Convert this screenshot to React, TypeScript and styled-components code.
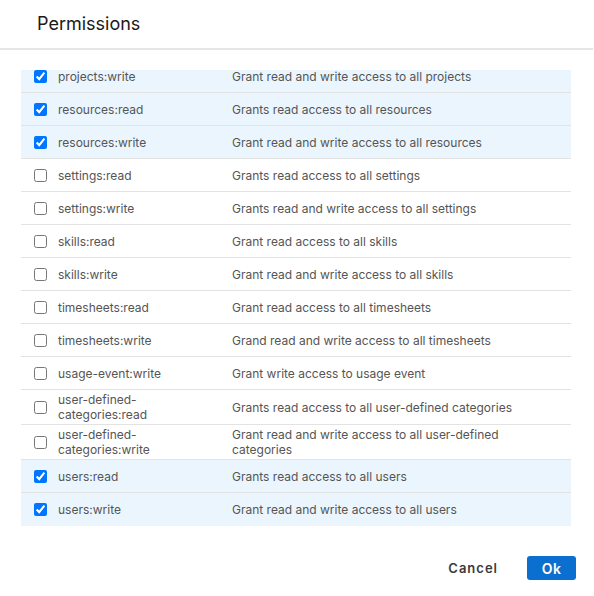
import React, { useEffect, useRef, useState } from "react";
import styled, { createGlobalStyle } from "styled-components";

const Global = createGlobalStyle`
  html, body { margin: 0; padding: 0; background: #fff; }
  body { font-family: Inter, "Noto Sans", sans-serif; }
  * { box-sizing: border-box; }
`;

const Dialog = styled.div`
  width: 594px;
  height: 596px;
  display: flex;
  flex-direction: column;
  background: #fff;
`;

const Header = styled.div`
  height: 50px;
  padding: 0 0 0 37px;
  display: flex;
  align-items: center;
  border-bottom: 2px solid #e6e6e6;
  margin-right: 1px;
`;

const Title = styled.h2`
  margin: 0 0 1px 0;
  font-size: 18px;
  font-weight: 400;
  color: #1a1a1a;
`;

const Body = styled.div`
  padding: 20px 23px 0 21px;
`;

const Scroller = styled.div`
  height: 456px;
  overflow-y: auto;
  scrollbar-width: none;
  &::-webkit-scrollbar { display: none; }
`;

const Row = styled.label<{ $checked: boolean }>`
  display: grid;
  grid-template-columns: 37px 174px 1fr;
  align-items: center;
  min-height: 33px;
  border-bottom: 1px solid #e3e3e3;
  background: ${(p) => (p.$checked ? "#ebf5fe" : "#fff")};
  font-size: 12px;
  line-height: 15px;
  color: #555;
  &:last-child { border-bottom-color: transparent; }
`;

const CheckCell = styled.div`
  padding-left: 13px;
  display: flex;
  align-items: center;
`;

const Check = styled.input`
  margin: 0;
  width: 13px;
  height: 13px;
`;

const Name = styled.div`
  padding: 2px 8px 2px 0;
`;

const Desc = styled.div`
  padding: 2px 50px 2px 0;
`;

const Footer = styled.div`
  display: flex;
  justify-content: flex-end;
  align-items: center;
  gap: 17px;
  padding: 30px 18px 0 0;
`;

const Button = styled.button<{ $primary?: boolean }>`
  height: 24px;
  border: none;
  border-radius: 3px;
  font-family: Inter, "Noto Sans", sans-serif;
  font-size: ${(p) => (p.$primary ? "14px" : "13px")};
  font-weight: 600;
  letter-spacing: ${(p) => (p.$primary ? "0.3px" : "1px")};
  padding: ${(p) => (p.$primary ? "0 14px" : "0 12px")};
  min-width: ${(p) => (p.$primary ? "49px" : "auto")};
  background: ${(p) => (p.$primary ? "#0b6fd0" : "transparent")};
  color: ${(p) => (p.$primary ? "#fff" : "#3a3a3a")};
  cursor: pointer;
`;

type Perm = { name: string; desc: string; checked: boolean };

const initial: Perm[] = [
  { name: "projects:read", desc: "Grants read access to all projects", checked: true },
  { name: "projects:write", desc: "Grant read and write access to all projects", checked: true },
  { name: "resources:read", desc: "Grants read access to all resources", checked: true },
  { name: "resources:write", desc: "Grant read and write access to all resources", checked: true },
  { name: "settings:read", desc: "Grants read access to all settings", checked: false },
  { name: "settings:write", desc: "Grants read and write access to all settings", checked: false },
  { name: "skills:read", desc: "Grant read access to all skills", checked: false },
  { name: "skills:write", desc: "Grant read and write access to all skills", checked: false },
  { name: "timesheets:read", desc: "Grant read access to all timesheets", checked: false },
  { name: "timesheets:write", desc: "Grand read and write access to all timesheets", checked: false },
  { name: "usage-event:write", desc: "Grant write access to usage event", checked: false },
  { name: "user-defined-categories:read", desc: "Grants read access to all user-defined categories", checked: false },
  { name: "user-defined-categories:write", desc: "Grant read and write access to all user-defined categories", checked: false },
  { name: "users:read", desc: "Grants read access to all users", checked: true },
  { name: "users:write", desc: "Grant read and write access to all users", checked: true },
];

export default function App() {
  const [perms, setPerms] = useState(initial);
  const ref = useRef<HTMLDivElement>(null);

  useEffect(() => {
    if (ref.current) ref.current.scrollTop = ref.current.scrollHeight;
  }, []);

  const toggle = (i: number) =>
    setPerms((ps) => ps.map((p, j) => (j === i ? { ...p, checked: !p.checked } : p)));

  return (
    <>
      <Global />
      <Dialog>
        <Header>
          <Title>Permissions</Title>
        </Header>
        <Body>
          <Scroller ref={ref}>
            {perms.map((p, i) => (
              <Row key={p.name} $checked={p.checked}>
                <CheckCell>
                  <Check type="checkbox" checked={p.checked} onChange={() => toggle(i)} />
                </CheckCell>
                <Name>{p.name}</Name>
                <Desc>{p.desc}</Desc>
              </Row>
            ))}
          </Scroller>
        </Body>
        <Footer>
          <Button>Cancel</Button>
          <Button $primary>Ok</Button>
        </Footer>
      </Dialog>
    </>
  );
}
